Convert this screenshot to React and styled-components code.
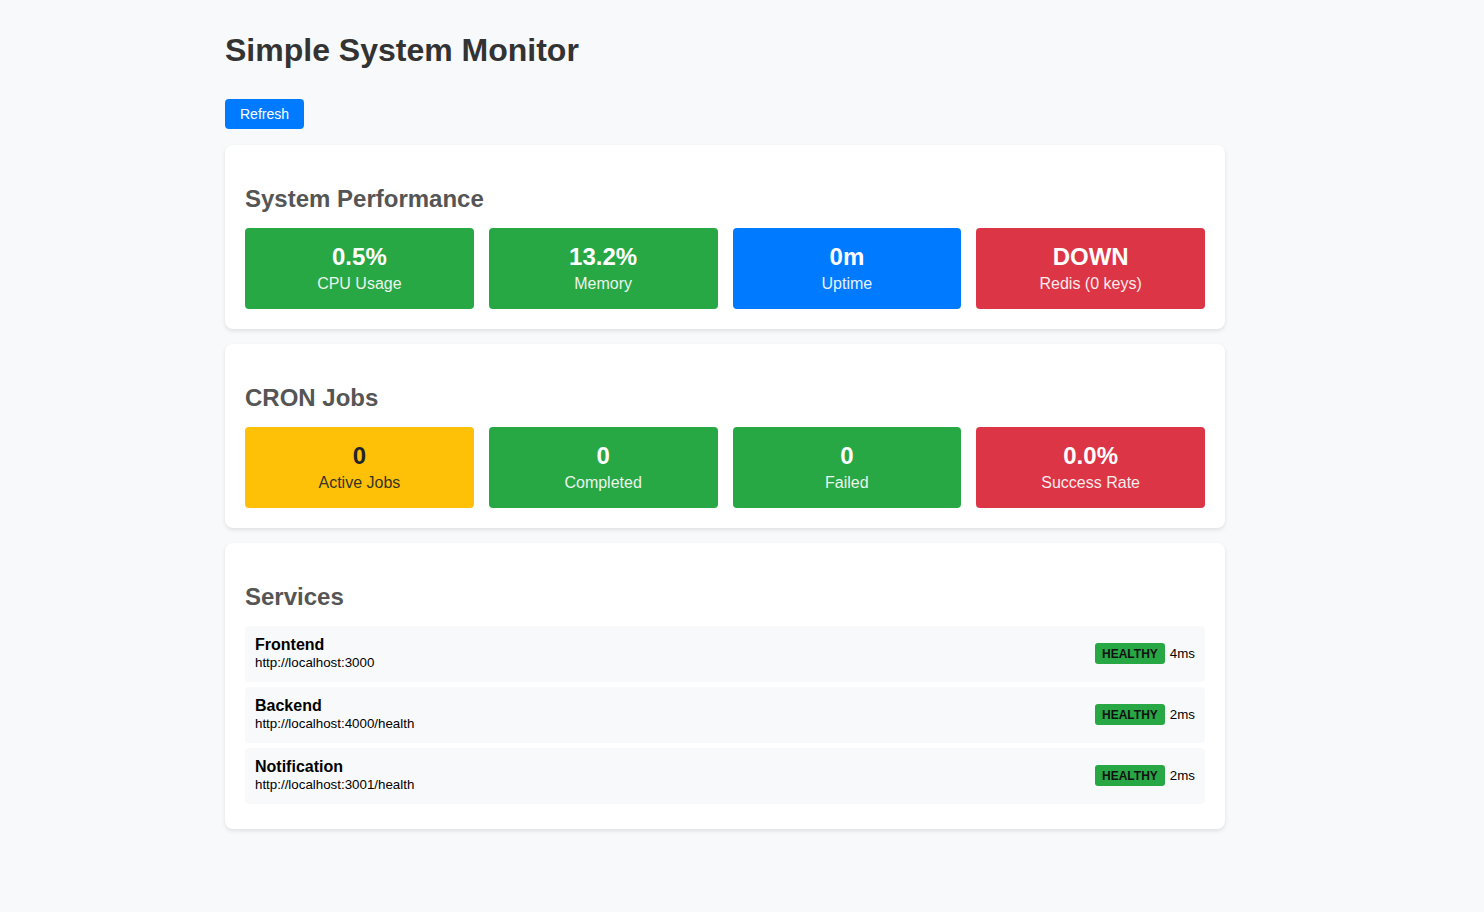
import React from "react";
import styled, { createGlobalStyle } from "styled-components";

const GlobalStyle = createGlobalStyle`
  html, body { margin: 0; padding: 0; }
  body {
    background: #f8f9fa;
    font-family: "Liberation Sans", Arial, sans-serif;
    color: #000;
  }
`;

const Page = styled.div`
  width: 1000px;
  margin-left: 225px;
  padding-top: 32px;
  padding-bottom: 60px;
`;

const Title = styled.h1`
  margin: 0;
  font-size: 32px;
  line-height: 37px;
  font-weight: bold;
  color: #333;
`;

const RefreshButton = styled.button`
  display: block;
  margin: 30px 0 16px;
  padding: 7px 15px;
  border: none;
  border-radius: 4px;
  background: #007bff;
  color: #fff;
  font-family: "Liberation Sans", Arial, sans-serif;
  font-size: 14px;
  line-height: 16px;
  cursor: pointer;
`;

const Card = styled.section`
  background: #fff;
  border-radius: 8px;
  box-shadow: 0 2px 4px rgba(0, 0, 0, 0.1);
  padding: 20px;
  margin-bottom: 15.5px;
`;

const SectionTitle = styled.h2`
  margin: 20px 0 15px;
  font-size: 24px;
  line-height: 27.6px;
  font-weight: bold;
  color: #555;
`;

const StatGrid = styled.div`
  display: grid;
  grid-template-columns: repeat(4, 1fr);
  gap: 15px;
`;

const colors = {
  green: { bg: "#28a745", fg: "#fff" },
  blue: { bg: "#007bff", fg: "#fff" },
  red: { bg: "#dc3545", fg: "#fff" },
  yellow: { bg: "#ffc107", fg: "#212529" },
};

const StatBox = styled.div`
  background: ${(p) => colors[p.$tone].bg};
  color: ${(p) => colors[p.$tone].fg};
  border-radius: 4px;
  padding: 15px;
  text-align: center;
`;

const StatValue = styled.div`
  font-size: 24px;
  line-height: 27.6px;
  font-weight: bold;
  margin-bottom: 5px;
`;

const StatLabel = styled.div`
  font-size: 16px;
  line-height: 18.4px;
  opacity: 0.9;
`;

const ServiceList = styled.div`
  display: flex;
  flex-direction: column;
`;

const ServiceRow = styled.div`
  display: flex;
  align-items: center;
  justify-content: space-between;
  background: #f8f9fa;
  border-radius: 4px;
  padding: 10px;
  margin-bottom: 5px;
`;

const ServiceName = styled.div`
  font-size: 16px;
  line-height: 18.4px;
  font-weight: bold;
`;

const ServiceUrl = styled.div`
  font-size: 13.333px;
  line-height: 17.6px;
`;

const ServiceStatus = styled.div`
  display: flex;
  align-items: center;
  gap: 5px;
`;

const Badge = styled.span`
  display: inline-flex;
  align-items: center;
  height: 21px;
  box-sizing: border-box;
  background: #28a745;
  color: #111;
  font-size: 12px;
  font-weight: bold;
  padding: 1px 7px 0;
  border-radius: 3px;
`;

const Latency = styled.span`
  font-size: 13.333px;
`;

const performance = [
  { value: "0.5%", label: "CPU Usage", tone: "green" },
  { value: "13.2%", label: "Memory", tone: "green" },
  { value: "0m", label: "Uptime", tone: "blue" },
  { value: "DOWN", label: "Redis (0 keys)", tone: "red" },
];

const cron = [
  { value: "0", label: "Active Jobs", tone: "yellow" },
  { value: "0", label: "Completed", tone: "green" },
  { value: "0", label: "Failed", tone: "green" },
  { value: "0.0%", label: "Success Rate", tone: "red" },
];

const services = [
  { name: "Frontend", url: "http://localhost:3000", ms: "4ms" },
  { name: "Backend", url: "http://localhost:4000/health", ms: "2ms" },
  { name: "Notification", url: "http://localhost:3001/health", ms: "2ms" },
];

function Stats({ items }) {
  return (
    <StatGrid>
      {items.map((s) => (
        <StatBox key={s.label} $tone={s.tone}>
          <StatValue>{s.value}</StatValue>
          <StatLabel>{s.label}</StatLabel>
        </StatBox>
      ))}
    </StatGrid>
  );
}

export default function App() {
  return (
    <>
      <GlobalStyle />
      <Page>
        <Title>Simple System Monitor</Title>
        <RefreshButton>Refresh</RefreshButton>
        <Card>
          <SectionTitle>System Performance</SectionTitle>
          <Stats items={performance} />
        </Card>
        <Card>
          <SectionTitle>CRON Jobs</SectionTitle>
          <Stats items={cron} />
        </Card>
        <Card>
          <SectionTitle>Services</SectionTitle>
          <ServiceList>
            {services.map((s) => (
              <ServiceRow key={s.name}>
                <div>
                  <ServiceName>{s.name}</ServiceName>
                  <ServiceUrl>{s.url}</ServiceUrl>
                </div>
                <ServiceStatus>
                  <Badge>HEALTHY</Badge>
                  <Latency>{s.ms}</Latency>
                </ServiceStatus>
              </ServiceRow>
            ))}
          </ServiceList>
        </Card>
      </Page>
    </>
  );
}
